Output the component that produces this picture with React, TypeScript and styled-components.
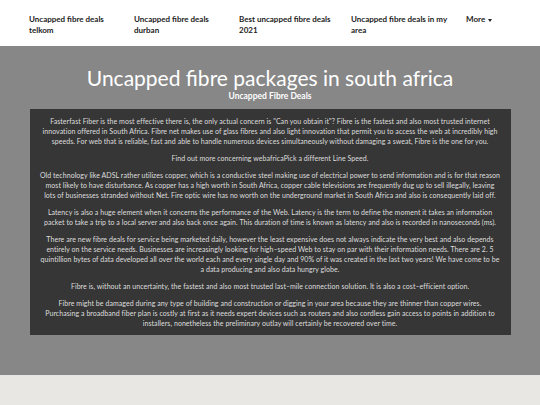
import { Fragment } from 'react'
import { createGlobalStyle, styled } from 'styled-components'

const Global = createGlobalStyle`
  html, body { margin: 0; padding: 0; }
  body {
    background: #e8e7e3;
    font-family: Lato, "Noto Sans", sans-serif;
  }
`

const Page = styled.div`
  width: 540px;
  min-height: 405px;
  background: #e8e7e3;
`

const NavBar = styled.nav`
  height: 46px;
  background: #fff;
  display: grid;
  grid-template-columns: 105px 105px 112px 115px auto;
  align-items: start;
  padding: 14px 0 0 29px;
  box-sizing: border-box;
`

const NavItem = styled.a`
  font-size: 8px;
  line-height: 11px;
  font-weight: 700;
  color: #222;
  text-decoration: none;
  max-width: 98px;
  display: flex;
  align-items: center;
  gap: 3px;
`

const Caret = styled.span`
  width: 0;
  height: 0;
  border-left: 2.5px solid transparent;
  border-right: 2.5px solid transparent;
  border-top: 3px solid #222;
  margin-top: 1px;
`

const Hero = styled.section`
  background: #878787;
  padding: 19px 0 40px;
  display: flex;
  flex-direction: column;
  align-items: center;
`

const Title = styled.h1`
  margin: 0;
  font-size: 21px;
  line-height: 26px;
  font-weight: 400;
  color: #fff;
  text-align: center;
`

const Subtitle = styled.h2`
  margin: 0 0 7px;
  font-size: 8.5px;
  line-height: 11px;
  font-weight: 700;
  color: #fff;
  text-align: center;
`

const Content = styled.div`
  width: 481px;
  box-sizing: border-box;
  background: #363636;
  padding: 7px 4px 0;
  color: #dedede;
  text-align: center;
`

const Para = styled.p`
  margin: 0 0 7px;
  font-size: 7px;
  line-height: 10px;
  letter-spacing: 0.05px;
`

const navItems = [
  'Uncapped fibre deals telkom',
  'Uncapped fibre deals durban',
  'Best uncapped fibre deals 2021',
  'Uncapped fibre deals in my area',
]

// each paragraph kept as its visual lines
const paragraphs: string[][] = [
  [
    'Fasterfast Fiber is the most effective there is, the only actual concern is "Can you obtain it"? Fibre is the fastest and also most trusted internet',
    'innovation offered in South Africa. Fibre net makes use of glass fibres and also light innovation that permit you to access the web at incredibly high',
    'speeds. For web that is reliable, fast and able to handle numerous devices simultaneously without damaging a sweat, Fibre is the one for you.',
  ],
  ['Find out more concerning webafricaPick a different Line Speed.'],
  [
    'Old technology like ADSL rather utilizes copper, which is a conductive steel making use of electrical power to send information and is for that reason',
    'most likely to have disturbance. As copper has a high worth in South Africa, copper cable televisions are frequently dug up to sell illegally, leaving',
    'lots of businesses stranded without Net. Fire optic wire has no worth on the underground market in South Africa and also is consequently laid off.',
  ],
  [
    'Latency is also a huge element when it concerns the performance of the Web. Latency is the term to define the moment it takes an information',
    'packet to take a trip to a local server and also back once again. This duration of time is known as latency and also is recorded in nanoseconds (ms).',
  ],
  [
    'There are new fibre deals for service being marketed daily, however the least expensive does not always indicate the very best and also depends',
    'entirely on the service needs. Businesses are increasingly looking for high\u2013speed Web to stay on par with their information needs. There are 2. 5',
    'quintillion bytes of data developed all over the world each and every single day and 90% of it was created in the last two years! We have come to be',
    'a data producing and also data hungry globe.',
  ],
  ['Fibre is, without an uncertainty, the fastest and also most trusted last\u2013mile connection solution. It is also a cost\u2013efficient option.'],
  [
    'Fibre might be damaged during any type of building and construction or digging in your area because they are thinner than copper wires.',
    'Purchasing a broadband fiber plan is costly at first as it needs expert devices such as routers and also cordless gain access to points in addition to',
    'installers, nonetheless the preliminary outlay will certainly be recovered over time.',
  ],
]

export default function App() {
  return (
    <Page>
      <Global />
      <NavBar>
        {navItems.map(t => (
          <NavItem key={t} href="#">{t}</NavItem>
        ))}
        <NavItem href="#">More <Caret /></NavItem>
      </NavBar>
      <Hero>
        <Title>Uncapped fibre packages in south africa</Title>
        <Subtitle>Uncapped Fibre Deals</Subtitle>
        <Content>
          {paragraphs.map((lines, i) => (
            <Para key={i}>
              {lines.map((l, j) => (
                <Fragment key={j}>
                  {j > 0 && <br />}
                  {l}
                </Fragment>
              ))}
            </Para>
          ))}
        </Content>
      </Hero>
    </Page>
  )
}
